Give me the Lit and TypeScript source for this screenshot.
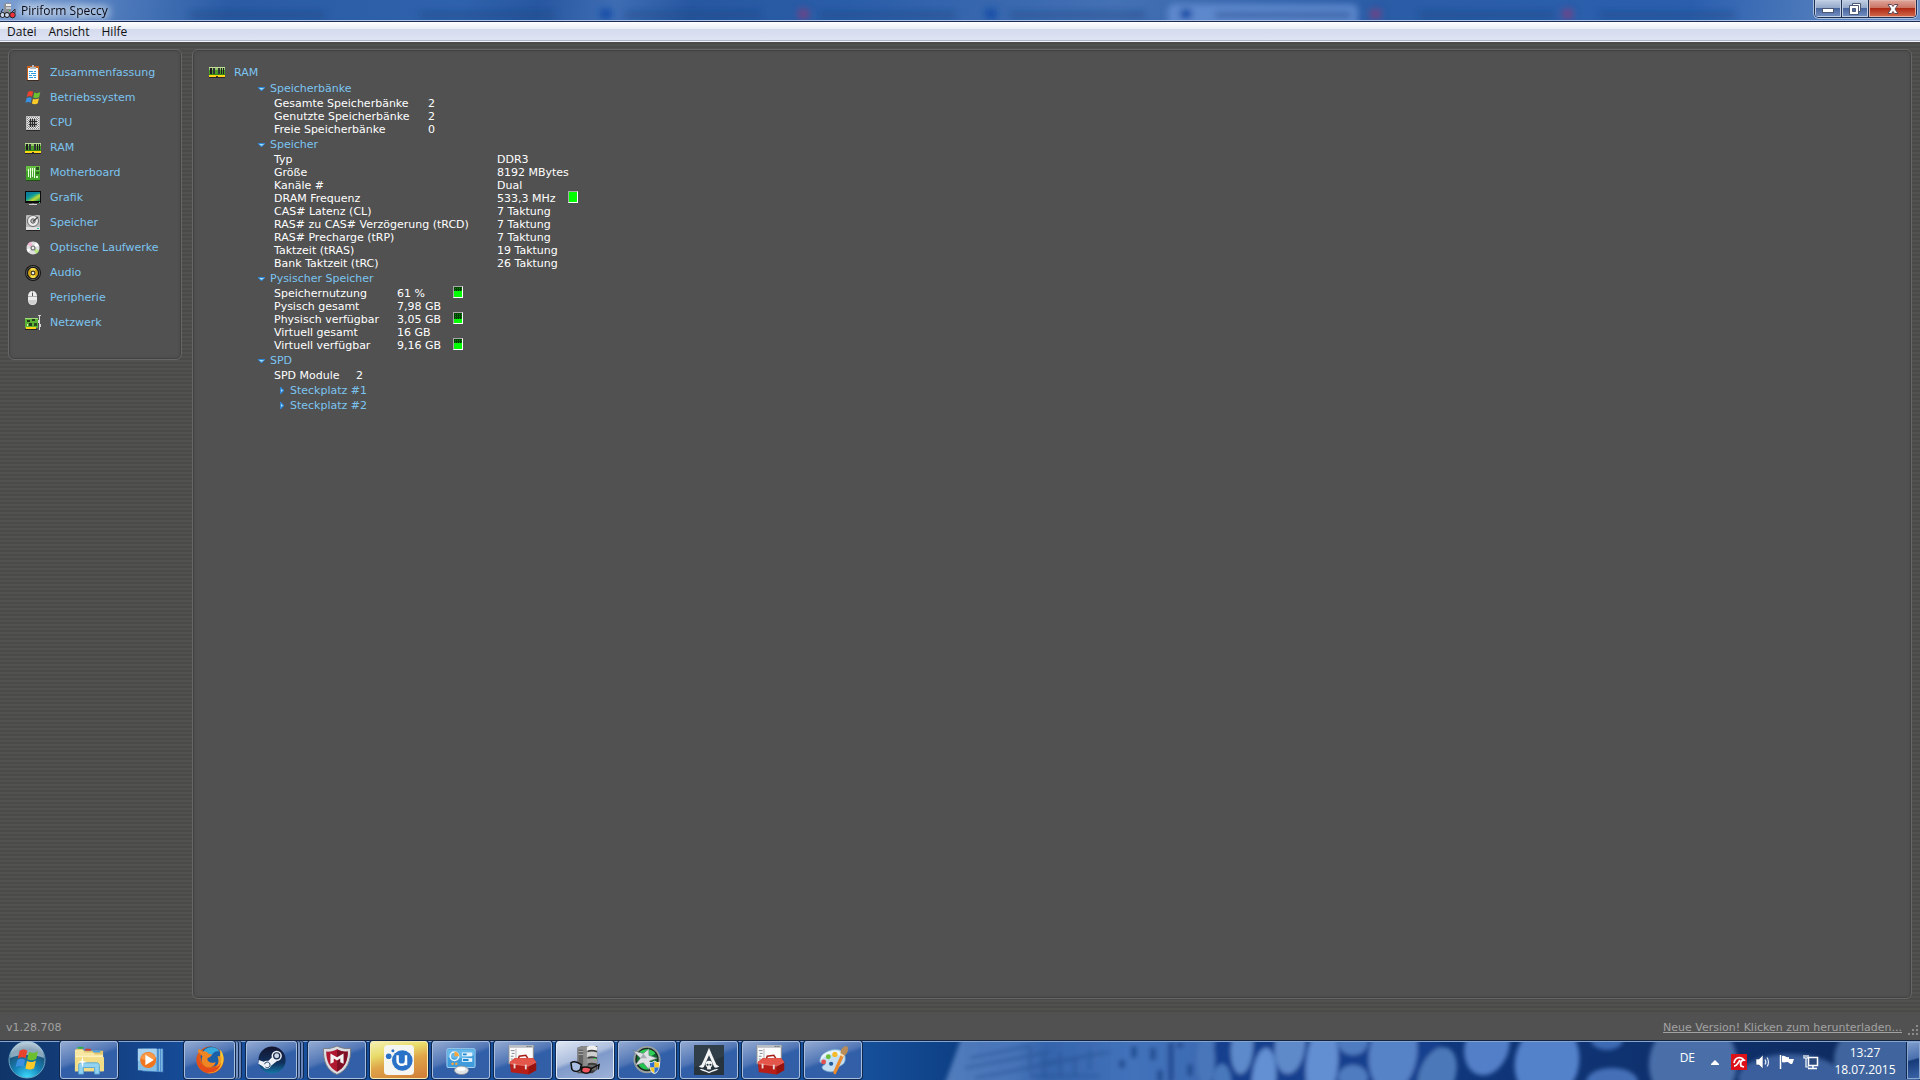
import { LitElement, html, svg, css, nothing } from "lit";
import type { TemplateResult } from "lit";
import { customElement, property, state } from "lit/decorators.js";
import { classMap } from "lit/directives/class-map.js";

/* ---------- 16px icons ---------- */

const flagPanes = svg`
  <path d="M3 2C5 .7 6.600.700 8.200 1.800L7 6.800C5.300 5.800 3.700 5.900 1.800 7.100Z" fill="#e8432c"/>
  <path d="M9.300 2.500C11.300 3.500 13.200 3.500 15.300 2.100L14.200 7.100C12.200 8.500 10.400 8.400 8.200 7.500Z" fill="#6cbf2f"/>
  <path d="M1.500 8.200C3.400 6.900 5 6.900 6.700 7.900L5.600 12.700C3.900 11.700 2.300 11.700.4 12.900Z" fill="#3a8fe0"/>
  <path d="M8 8.700C10 9.700 11.900 9.600 13.900 8.300L12.800 13.300C10.800 14.700 8.900 14.600 6.900 13.600Z" fill="#fbc928"/>`;

const ramArt = svg`
  <rect x="0" y="3" width="16" height="8" fill="#4c9a28"/>
  <rect x="0" y="3" width="16" height="1" fill="#c0e09a"/>
  <rect x="0" y="4" width="16" height="2" fill="#94c468"/>
  <rect x="1" y="4" width="2" height="6" fill="#1c1c22"/><rect x="4" y="4" width="2" height="6" fill="#33333a"/>
  <rect x="9" y="4" width="2" height="6" fill="#33333a"/><rect x="12" y="4" width="1" height="6" fill="#1c1c22"/><rect x="14" y="4" width="1" height="6" fill="#1c1c22"/>
  <rect x="0" y="10" width="16" height="1" fill="#2e8a12"/>
  <rect x="0" y="11" width="16" height="2" fill="#ffd515"/><rect x="7" y="12" width="2" height="1" fill="#333"/>
  <rect x="0" y="13" width="16" height="1" fill="#262626"/>`;

const small: Record<string, TemplateResult> = {
  summary: svg`
    <rect x="2" y="1" width="12" height="14" fill="#c8611f"/>
    <rect x="3" y="3" width="10" height="12" fill="#f8fcff"/>
    <path d="M5 4V2h2V0h2v2h2v2z" fill="#b5b9bd"/>
    <path d="M4 6.500h4M9 6.500h2M4 8.500h1M6 8.500h5M4 10.500h3M8 10.500h3M4 12.500h4M9 12.500h2" stroke="#2e9be0"/>
    <rect x="2" y="15" width="12" height="1" fill="#3a2a22"/>`,
  os: flagPanes,
  cpu: svg`
    <defs><pattern id="pins" width="2" height="2" patternUnits="userSpaceOnUse"><rect width="2" height="2" fill="#efefef"/><path d="M0 0h1v1H0zM1 1h1v1H1z" fill="#8a8a8a"/></pattern></defs>
    <rect x="1" y="1" width="14" height="14" fill="#bdbdbd"/>
    <rect x="2" y="2" width="12" height="12" fill="url(#pins)"/>
    <rect x="4" y="4" width="8" height="8" fill="#a9a9a9"/>
    <path d="M5.500 4v8M7.500 4v8M9.500 4v8M4 6.500h8M4 9.500h8" stroke="#2b2b2b"/>
    <path d="M1 15.500h14" stroke="#2a2a2a"/>`,
  ram: ramArt,
  board: svg`
    <rect x="1" y="1" width="14" height="14" fill="#3fa427"/>
    <rect x="1" y="1" width="14" height="5" fill="#66c044"/>
    <path d="M3.500 4v8M5.500 3v10M7.500 3v9M9.500 3v10" stroke="#e9ffe0"/>
    <rect x="11" y="2" width="3" height="3" fill="#2d4a26"/><rect x="11" y="7" width="3" height="2" fill="#2d6a1e"/>
    <rect x="11" y="11" width="2" height="2" fill="#d6efc8"/>
    <rect x="1" y="15" width="14" height="1" fill="#254d18"/>`,
  graphics: svg`
    <defs><linearGradient id="scr" x1="0" y1="0" x2="1" y2="1">
      <stop offset="0" stop-color="#0f6f8f"/><stop offset=".45" stop-color="#12a296"/><stop offset=".7" stop-color="#c4dd34"/><stop offset="1" stop-color="#0c8c5c"/></linearGradient></defs>
    <rect x="0" y="1" width="16" height="12" fill="#0c0c0c"/>
    <rect x="1" y="2" width="14" height="9" fill="url(#scr)"/>
    <path d="M1 8C5 4 10 3 15 4V2H1z" fill="#0d7f9c" opacity=".7"/>
    <rect x="7" y="13" width="2" height="1" fill="#777"/><rect x="4" y="14" width="8" height="1" fill="#cfcfcf"/>
    <rect x="14" y="12" width="1" height="1" fill="#30e07a"/>`,
  storage: svg`
    <rect x="1" y="0" width="14" height="13" rx="1" fill="#b9b9b9"/>
    <circle cx="8" cy="6" r="5.500" fill="#ededed" stroke="#6a6a6a"/>
    <circle cx="8" cy="6" r="2.200" fill="#c4c4c4" stroke="#555"/>
    <path d="M13 2L8 6.500" stroke="#4a4a4a" stroke-width="1.400"/>
    <rect x="1" y="12" width="14" height="3" fill="#e0e0e0"/><rect x="12" y="13" width="2" height="1" fill="#25c3af"/>
    <rect x="1" y="15" width="14" height="1" fill="#222"/>`,
  optical: svg`
    <circle cx="8" cy="8" r="6.500" fill="#dedede"/>
    <path d="M8 8L2.500 4.500A6.500 6.500 0 0 1 6 1.800z" fill="#f2b3d4"/>
    <path d="M8 8L14 10.500A6.500 6.500 0 0 1 11 13.800z" fill="#b3e87a"/>
    <path d="M8 8L11 2.200A6.500 6.500 0 0 1 14 5.500z" fill="#fff"/>
    <path d="M8 8L3 12.200A6.500 6.500 0 0 1 1.600 9z" fill="#fff"/>
    <circle cx="8" cy="8" r="2.600" fill="#7d7d7d"/><circle cx="8" cy="8" r="1.200" fill="#f4f4f4"/>`,
  audio: svg`
    <circle cx="8" cy="8" r="8" fill="#141414"/><circle cx="8" cy="8" r="6.600" fill="none" stroke="#6a6a6a" stroke-width=".8"/>
    <circle cx="8" cy="8" r="5" fill="#d2a414"/><path d="M8 8L5 4A5 5 0 0 1 11 4zM8 8L5 12A5 5 0 0 0 11 12z" fill="#f8e04c"/>
    <circle cx="8" cy="8" r="2.400" fill="#3a3420"/><circle cx="8" cy="8" r="1.300" fill="#f2efe4"/>`,
  mouse: svg`
    <path d="M3 6C3 3 5 1 7.500 1S12 3 12 6V10C12 13 10.500 15 7.500 15S3 13 3 10z" fill="#ececec"/>
    <path d="M3 6.500h9M7.500 1v5.500" stroke="#9c9c9c" stroke-width=".8"/><rect x="7" y="3" width="1" height="3" fill="#555"/>
    <path d="M3.500 10C4 13 5.500 14.500 7.500 14.500S11 13 11.500 10" fill="#cfcfcf"/>`,
  network: svg`
    <path d="M14.500 1v14M13 .5H16" stroke="#d8d8d8" fill="none"/>
    <rect x="0" y="3" width="13" height="10" fill="#5cb234"/><rect x="0" y="3" width="13" height="1" fill="#a4dc80"/>
    <rect x="2" y="5" width="3" height="2" fill="#233a1c"/><rect x="4" y="8" width="3" height="3" fill="#233a1c"/>
    <rect x="7" y="4" width="3" height="2" fill="#233a1c"/><rect x="9" y="8" width="3" height="3" fill="#2c4a22"/>
    <rect x="2" y="9" width="1" height="2" fill="#d2e8c4"/><rect x="1" y="12" width="10" height="2" fill="#ffd515"/>
    <rect x="13" y="5" width="1" height="3" fill="#d8d8d8"/><rect x="15" y="9" width="1" height="3" fill="#d8d8d8"/><rect x="0" y="14" width="12" height="1" fill="#222"/>`,
  app: svg`
    <path d="M4 1L6 0H11V10H4z" fill="#8d9096"/><rect x="6" y="1" width="5" height="2" fill="#eef0f2"/><rect x="6" y="4" width="5" height="2" fill="#c4c8cc"/><rect x="6" y="7" width="5" height="2" fill="#8d9096"/>
    <rect x="9" y="7" width="1" height="1" fill="#30c84a"/>
    <circle cx="2.500" cy="12" r="2.500" fill="#c9d6ea" stroke="#111"/><circle cx="7" cy="12" r="2.500" fill="#c9d6ea" stroke="#111"/>
    <circle cx="12.500" cy="12" r="2.800" fill="#ee3038" stroke="#222"/><path d="M1 9L3 6M12 9L15 6V10" stroke="#222" fill="none"/>`,
};

/* ---------- 32px taskbar icons ---------- */

const speccy = svg`
  <path d="M8 3L13 1H29V26L24 30H8z" fill="#3e3e3e"/>
  <path d="M8 3L13 1H19V29H8z" fill="#8b8b8b"/><path d="M9 5H14V28H9z" fill="#626262"/>
  <path d="M9 7h5M9 10h5" stroke="#b0b0b0"/>
  <path d="M18 2Q23 -1 29 2V6Q23 4 18 6z" fill="#f0f0f0"/><path d="M18 8Q23 6 29 8V13Q23 11 18 13z" fill="#cfcfcf"/>
  <path d="M18 15Q23 13 29 15V20Q23 18 18 20z" fill="#9c9c9c"/><path d="M18 22Q23 20 28 22V27H18z" fill="#686868"/>
  <rect x="25" y="14" width="3" height="1" fill="#36e04a"/>
  <path d="M1 19C4 17 8 18 12 21L11 26C9 29 4 29 2 26z" fill="#a8bfe2" stroke="#111" stroke-width="1.600"/>
  <path d="M13 24C16 23 20 24 23 25L21 29C18 31 14 30 12 28z" fill="#f0545c" stroke="#111" stroke-width="1.600"/>
  <path d="M23 25L31 21L30 26M11 23L13 25" stroke="#111" stroke-width="1.600" fill="none"/>`;

const toolbox = svg`
  <rect x="1" y="0" width="26" height="20" fill="#fafafa" stroke="#8a8a8a"/>
  <rect x="1" y="0" width="26" height="3" fill="#b9bec4"/><path d="M20 1.500h6" stroke="#444" stroke-dasharray="1 1"/>
  <path d="M8.500 4v16" stroke="#b2b2b2"/><path d="M3 6h4M4 9h3M3 12h3M3 15h2" stroke="#7c8794"/>
  <path d="M11 15L12 12L19 11L21 14" fill="none" stroke="#a81c16" stroke-width="1.600"/>
  <path d="M2 18L7 14L27 14L30 18V27L22 31.500L3 29z" fill="#b81e18"/>
  <path d="M2 18L7 14L27 14L30 18L22 22L2 20z" fill="#e4554a"/>
  <path d="M3 20L22 22.500L30 18.500" stroke="#f08a7e" fill="none" stroke-width=".8"/>
  <path d="M22 23V31.500L30 27V19z" fill="#96140f"/>
  <rect x="6" y="20" width="2" height="5" fill="#e8d6d2"/><rect x="18" y="21" width="2" height="5" fill="#e8d6d2"/>`;

const large: Record<string, TemplateResult> = {
  explorer: svg`
    <path d="M2 4H9L10 6H31V27H2z" fill="#e3c56a"/>
    <rect x="4" y="2" width="6" height="2" fill="#2fae4a"/><rect x="12" y="4" width="6" height="2" fill="#d63c2c"/><rect x="20" y="6" width="8" height="2" fill="#4aa4e8"/>
    <path d="M1 5H10L11 8H21L22 10H31V28H1z" fill="#f7e7a2"/><path d="M1 13H32V28H1z" fill="#f2dc86"/>
    <path d="M2 12h29" stroke="#fff6cc"/>
    <path d="M5 31V22C5 20 6 19 8 19H24C26 19 27 20 27 22V31H22V24H10V31z" fill="#93d2f0" stroke="#5ba7d2"/>
    <path d="M9 12L10 17L14 18L10 19L9 24L8 19L4 18L8 17z" fill="#fff"/>`,
  player: svg`
    <path d="M7 4L29 4V29L7 28z" fill="#4d8fce"/><path d="M25 4V28M27.500 4V28" stroke="#9cc8ea"/>
    <path d="M2 4L22 4V28L2 27z" fill="#86bfe6"/><path d="M2 4L22 4V13L2 17z" fill="#a8d2ee"/>
    <circle cx="13" cy="16" r="8.500" fill="#f2741c"/><path d="M5 14a8.500 8.500 0 0 1 16 0C16 17 10 17 5 14z" fill="#fa9a48"/>
    <path d="M10 10.500L19 16L10 21.500z" fill="#fff"/>`,
  firefox: svg`
    <circle cx="16" cy="16" r="14.500" fill="#e05a17"/>
    <circle cx="17" cy="12.500" r="11" fill="#1a5fa8"/><path d="M9 7C13 1 23 1 26 7C22 6 19 8 18 11C14 12 10 11 9 7z" fill="#38a9dd"/>
    <path d="M27 5C31 10 32 17 28 23C25 28 18 31 13 30C20 29 26 23 26 16C27 12 27 9 27 5z" fill="#fbc52f"/>
    <path d="M3 7L4 4L8 7C10 6 13 7 14 9L18 10C17 13 14 13 13 15C14 19 18 20 22 18C21 23 15 26 10 22C6 19 7 14 8 12z" fill="#f08524"/>
    <path d="M2 11C1 18 4 26 12 29C20 31 27 26 28 18C24 25 14 28 8 22C4 19 3 15 2 11z" fill="#e6491a"/>
    <path d="M24 12C26 17 25 21 22 24C27 22 29 17 28 12z" fill="#f39a25"/>`,
  steam: svg`
    <defs><linearGradient id="stm" x1="0" y1="0" x2="0" y2="1"><stop offset="0" stop-color="#14142e"/><stop offset=".6" stop-color="#10305c"/><stop offset="1" stop-color="#1478a8"/></linearGradient></defs>
    <circle cx="16" cy="16" r="14.500" fill="url(#stm)"/>
    <path d="M2 16L10 19L16 13L24 15L14 23L8 24L1.500 20z" fill="#eef2f8"/>
    <circle cx="21" cy="11.500" r="5.500" fill="#eef2f8"/><circle cx="21" cy="11.500" r="3.900" fill="#17284c"/><circle cx="21" cy="11.500" r="2.600" fill="#cfd8e6"/>
    <circle cx="10.500" cy="21" r="4.200" fill="#eef2f8"/><path d="M8 20.500A3 3 0 1 1 9 23.500" fill="none" stroke="#17365e"/>`,
  mcafee: svg`
    <path d="M1.500 3.500C7 4.500 12 3 16 1C20 3 25 4.500 30.500 3.500C31 17 27 27 16 31.500C5 27 1 17 1.500 3.500z" fill="#d9dce0" stroke="#74797f"/>
    <path d="M4.500 7C9 7.500 13 6 16 4.500C19 6 23 7.500 27.500 7C27.500 17 24 24.500 16 28.500C8 24.500 4.500 17 4.500 7z" fill="#b01830"/>
    <path d="M16 4.500C19 6 23 7.500 27.500 7C27.500 17 24 24.500 16 28.500z" fill="#7f0f24"/>
    <path d="M9 20V9L16 13L23 9V20L19.500 18.500V14.500L16 16.500L12.500 14.500V18.500z" fill="#f4f4f4"/>`,
  uplay: svg`
    <rect width="32" height="32" rx="4" fill="#f5f5f2"/>
    <circle cx="5" cy="12" r="3" fill="#2a72c8"/><circle cx="9.500" cy="6" r="1.600" fill="#2a72c8"/>
    <circle cx="19.500" cy="16.500" r="11" fill="#2a72c8"/><path d="M14.500 11V17C14.500 22.500 23.500 22.500 23.500 17V11" fill="none" stroke="#fff" stroke-width="2.600"/>
    <path d="M23.500 17V21.500" stroke="#fff" stroke-width="2.600"/>`,
  control: svg`
    <rect x="1" y="4" width="30" height="20" rx="1" fill="#3f9bdc" stroke="#a9d8f4"/>
    <path d="M2 5H30V11C20 15 10 15 2 13z" fill="#67b8ea"/>
    <circle cx="9" cy="12" r="4.500" fill="none" stroke="#e8f6ff" stroke-width="1.600"/><path d="M9 12V7A5 5 0 0 1 14 12z" fill="#f6a63c"/>
    <rect x="17" y="8" width="11" height="4" fill="#e4f4fe"/><rect x="17" y="14" width="11" height="4" fill="#e4f4fe"/>
    <path d="M18 10h4M18 16h6" stroke="#1d86cc" stroke-width="2"/>
    <circle cx="7" cy="20" r="1.300" fill="#f6a63c"/><circle cx="11" cy="20" r="1.300" fill="#f6a63c"/>
    <ellipse cx="16.500" cy="27" rx="7.500" ry="4.500" fill="#dfe3e6" stroke="#868c92" stroke-width=".8"/><ellipse cx="16" cy="25.500" rx="4.500" ry="2" fill="#fff"/>`,
  toolbox,
  speccy,
  star: svg`
    <circle cx="16" cy="15.500" r="13.500" fill="#1d2a22" stroke="#98a2a0" stroke-width="2"/>
    <circle cx="16" cy="15.500" r="11" fill="#0c6a2c"/><path d="M7 9C11 3 21 3 25 9L17 14z" fill="#2fd058"/><path d="M7 21C10 26 17 28 22 24L15 17z" fill="#24c24e"/>
    <path d="M1 6L12 9L18 4L18 11L27 14L19 17L18 26L12 19L3 22L9 14z" fill="#dfe3e5" stroke="#6b7275" stroke-width=".6"/>
    <path d="M12 9L16 14L9 14z" fill="#a7adb0"/>
    <path d="M18 18C21 18.500 23 17.500 24 16.500C25 17.500 27 18.500 30 18C30 25 28 29 24 31C20 29 18 25 18 18z" fill="#e9edf2"/>
    <path d="M19 19C21.500 19 23 18.500 24 17.500V24H19.500z" fill="#2c6fd0"/><path d="M24 17.500C25 18.500 27 19 29 19L28.500 24H24z" fill="#f6c82c"/>
    <path d="M19.500 24H24V30C21 28.500 20 27 19.500 24z" fill="#f6c82c"/><path d="M24 24H28.500C28 27 27 28.500 24 30z" fill="#2c6fd0"/>`,
  creed: svg`
    <rect width="32" height="32" fill="#27343d"/><path d="M0 0H32V12L0 24z" fill="#2f3e48"/>
    <path d="M16 3C18 8 21 15 24 21L27 23C25 24.500 22.500 24.500 21.500 23.500L16 11L10.500 23.500C9.500 24.500 7 24.500 5 23L8 21C11 15 14 8 16 3z" fill="#f2f4f5"/>
    <path d="M6 25.500C11 25.500 12 27 16 28.500C20 27 21 25.500 26 25.500C23 28 20 28 16 30C12 28 9 28 6 25.500z" fill="#f2f4f5"/>
    <circle cx="16" cy="20.500" r="3.600" fill="#f2f4f5"/><rect x="14" y="23" width="4" height="3" fill="#f2f4f5"/>
    <circle cx="14.500" cy="21" r="1.100" fill="#27343d"/><circle cx="17.500" cy="21" r="1.100" fill="#27343d"/>`,
  paint: svg`
    <path d="M15 5C25 3 30 9 29 16C28 22 24 21 22 24C20 29 13 30 7 27C3 25 4 22 7 21C9 20 6 17 4 19C0 20 1 8 15 5z" fill="#c4def2" stroke="#6fa4cc" stroke-width=".8"/>
    <path d="M15 6.500C23 5 27 9 27 13C20 8 8 10 3 16C3 10 9 7.500 15 6.500z" fill="#e9f5fd"/>
    <circle cx="6" cy="18" r="2.600" fill="#e0504c"/><circle cx="11" cy="12.500" r="2.600" fill="#6cbf3a"/><circle cx="18" cy="10" r="2.800" fill="#f4bc2c"/><circle cx="14" cy="20" r="2.200" fill="#1f5c9c"/>
    <path d="M24.500 10L27.500 12L19 31C17 32 16 30 16.500 28z" fill="#e98a2c"/>
    <path d="M24.500 10C23 6 26 1 31 1C33 4 32 9 27.500 12z" fill="#b98d5a"/><path d="M24.500 10L27.500 12" stroke="#f5dfb0" stroke-width="2"/>`,
};

/* ---------- data ---------- */

interface Row { label: string; value: string; level?: number; }
interface Section { title: string; labelWidth: number; rows: Row[]; children?: string[]; }

const NAV: [string, string][] = [
  ["summary", "Zusammenfassung"], ["os", "Betriebssystem"], ["cpu", "CPU"], ["ram", "RAM"],
  ["board", "Motherboard"], ["graphics", "Grafik"], ["storage", "Speicher"],
  ["optical", "Optische Laufwerke"], ["audio", "Audio"], ["mouse", "Peripherie"], ["network", "Netzwerk"],
];

const SECTIONS: Section[] = [
  { title: "Speicherbänke", labelWidth: 154, rows: [
    { label: "Gesamte Speicherbänke", value: "2" },
    { label: "Genutzte Speicherbänke", value: "2" },
    { label: "Freie Speicherbänke", value: "0" } ] },
  { title: "Speicher", labelWidth: 223, rows: [
    { label: "Typ", value: "DDR3" },
    { label: "Größe", value: "8192 MBytes" },
    { label: "Kanäle #", value: "Dual" },
    { label: "DRAM Frequenz", value: "533,3 MHz", level: 100 },
    { label: "CAS# Latenz (CL)", value: "7 Taktung" },
    { label: "RAS# zu CAS# Verzögerung (tRCD)", value: "7 Taktung" },
    { label: "RAS# Precharge (tRP)", value: "7 Taktung" },
    { label: "Taktzeit (tRAS)", value: "19 Taktung" },
    { label: "Bank Taktzeit (tRC)", value: "26 Taktung" } ] },
  { title: "Pysischer Speicher", labelWidth: 123, rows: [
    { label: "Speichernutzung", value: "61 %", level: 60 },
    { label: "Pysisch gesamt", value: "7,98 GB" },
    { label: "Physisch verfügbar", value: "3,05 GB", level: 40 },
    { label: "Virtuell gesamt", value: "16 GB" },
    { label: "Virtuell verfügbar", value: "9,16 GB", level: 60 } ] },
  { title: "SPD", labelWidth: 82, rows: [{ label: "SPD Module", value: "2" }], children: ["Steckplatz #1", "Steckplatz #2"] },
];

interface Task { icon: string; name: string; kind?: "plain" | "stack" | "alert" | "active"; }
const TASKS: Task[] = [
  { icon: "explorer", name: "Windows-Explorer" },
  { icon: "player", name: "Windows Media Player", kind: "plain" },
  { icon: "firefox", name: "Mozilla Firefox", kind: "stack" },
  { icon: "steam", name: "Steam", kind: "stack" },
  { icon: "mcafee", name: "McAfee" },
  { icon: "uplay", name: "Uplay", kind: "alert" },
  { icon: "control", name: "Systemsteuerung" },
  { icon: "toolbox", name: "Werkzeuge" },
  { icon: "speccy", name: "Piriform Speccy", kind: "active" },
  { icon: "star", name: "Afterburner" },
  { icon: "creed", name: "Assassin's Creed" },
  { icon: "toolbox", name: "Werkzeuge" },
  { icon: "paint", name: "Paint" },
];

const reset = css`
  button { margin: 0; padding: 0; border: 0; background: none; font: inherit; color: inherit; text-align: left; cursor: pointer; }
  svg { display: block; flex: none; }
  .i16 { width: 16px; height: 16px; }
  .i32 { width: 30px; height: 30px; }
`;

const tiles = css`
  .panel {
    background: #515151;
    border: 1px solid #666;
    border-radius: 6px;
    box-shadow: inset 0 0 0 1px #424242, inset 0 0 3px 1px #484848;
    box-sizing: border-box;
  }
`;

/* ---------- title bar ---------- */

@customElement("title-bar")
class TitleBar extends LitElement {
  static styles = [reset, css`
    :host { display: block; }
    .bar {
      position: relative; display: flex; align-items: flex-start; height: 20px; overflow: hidden;
      border-bottom: 1px solid #a9c0e4; background: linear-gradient(100deg, #7c9fd2 0, #4f7bbc 6%, #2a5ba4 12%, #2f62ac 24%, #2757a0 28%, #3f6db4 32%, #2757a0 36%, #2a5da8 44%, #4470b4 58%, #2a5ca6 72%, #2b5fae 88%, #4b78ba 94%, #6c90c8 100%);
    }
    .edge { height: 1px; background: #1d2c52; }
    .ghosts { position: absolute; inset: 0; width: 100%; height: 100%; }
    .name {
      position: relative; display: flex; align-items: center; gap: 5px; flex: 1; height: 22px;
      font: 12px/20px "Open Sans", "Noto Sans", sans-serif; color: #0a0a14;
    }
    .name span { text-shadow: 0 0 8px #fff, 0 0 8px #fff, 0 0 12px #e8f0ff, 0 0 14px #e8f0ff; }
    .controls {
      position: relative; display: flex; height: 17px; margin-right: 3px; border: 1px solid #1e2f50; border-top: 0;
      border-radius: 0 0 5px 5px; overflow: hidden; box-shadow: 0 0 0 1px #a9bfe0;
    }
    .controls button {
      display: flex; align-items: center; justify-content: center; width: 27px; height: 17px;
      background: linear-gradient(#c2cfe2 0, #94a9cb 45%, #49679f 50%, #7391c2 100%);
      box-shadow: inset 0 0 0 1px #c0cfe6; border-right: 1px solid #1e2f50;
    }
    .controls .close { width: 47px; border-right: 0; background: linear-gradient(#dfa79c 0, #cb7464 45%, #b02a14 50%, #d46a4c 100%); box-shadow: inset 0 0 0 1px #e2b2a8; }
  `];

  render() {
    const xs = [190, 420, 625, 820, 1010, 1215, 1420, 1600];
    return html`<header class="bar">
      <svg class="ghosts" viewBox="0 0 1920 20" preserveAspectRatio="none" aria-hidden="true">
        <defs><filter id="b" x="-10%" width="120%" y="-80%" height="260%"><feGaussianBlur stdDeviation="3"/></filter></defs>
        <g filter="url(#b)">
          <rect x="1168" y="4" width="190" height="26" rx="6" fill="#6c96d8" opacity=".7"/>
          ${xs.map((x) => svg`<rect x=${x} y="12" width="135" height="6" fill="#173f7e" opacity=".45"/>`)}
          ${[798, 1370, 1562].map((x) => svg`<rect x=${x} y="9" width="11" height="10" fill="#8e3a78" opacity=".65"/>`)}
          ${[600, 985, 1180].map((x) => svg`<rect x=${x} y="9" width="12" height="10" fill="#1450a8"/>`)}
        </g>
      </svg>
      <div class="name"><svg class="i16" viewBox="0 0 16 16" aria-hidden="true">${small.app}</svg><span>Piriform Speccy</span></div>
      <div class="controls">
        <button aria-label="Minimieren"><svg width="14" height="14" viewBox="0 0 14 14"><rect x="1.500" y="6.500" width="11" height="4" fill="#fff" stroke="#4b5876"/></svg></button>
        <button aria-label="Wiederherstellen"><svg width="14" height="14" viewBox="0 0 14 14"><path d="M4.500 3V1.500H12.500V9.500H11" fill="#fff" stroke="#4b5876"/><path d="M1.500 3.500H10.500V12.500H1.500zM4.500 6.500V9.500H7.500V6.500z" fill="#fff" fill-rule="evenodd" stroke="#4b5876"/></svg></button>
        <button class="close" aria-label="Schließen"><svg width="14" height="14" viewBox="0 0 14 14"><path d="M2 2.500H5.500L7 4.500L8.500 2.500H12L9 7L12 11.500H8.500L7 9.500L5.500 11.500H2L5 7z" fill="#fff" stroke="#5c4a58"/></svg></button>
      </div>
    </header><div class="edge"></div>`;
  }
}

/* ---------- sidebar ---------- */

@customElement("side-nav")
class SideNav extends LitElement {
  static styles = [reset, tiles, css`
    :host { display: block; flex: none; }
    .panel { width: 174px; padding: 10px 16px 24px; }
    ul { margin: 0; padding: 0; list-style: none; }
    a { display: flex; align-items: center; gap: 9px; height: 25px; color: #7cc4f0; text-decoration: none; white-space: nowrap; }
  `];
  render() {
    return html`<nav class="panel" aria-label="Kategorien"><ul>
      ${NAV.map(([icon, label]) => html`<li><a href="#${icon}"><svg class="i16" viewBox="0 0 16 16" aria-hidden="true">${small[icon]}</svg>${label}</a></li>`)}
    </ul></nav>`;
  }
}

/* ---------- section of the report ---------- */

@customElement("report-section")
class ReportSection extends LitElement {
  @property({ attribute: false }) section!: Section;
  @state() private open = true;

  static styles = [reset, css`
    :host { display: block; }
    h2, h3 { margin: 0; font: inherit; }
    .toggle { display: flex; align-items: center; gap: 5px; height: 17px; color: #7cc4f0; }
    .toggle svg { width: 7px; height: 7px; }
    .body { padding-left: 16px; }
    table { border-collapse: collapse; }
    th, td { padding: 0; height: 13px; font-weight: normal; text-align: left; white-space: nowrap; color: #fff; }
    .gauge {
      display: flex; flex-direction: column; justify-content: flex-end; box-sizing: border-box;
      width: 10px; height: 12px; margin: -1px 0 2px 12px;
      border: 1px solid #fff; border-top-color: #a8a8a8; border-left-color: #a8a8a8;
      background: repeating-conic-gradient(#004800 0 25%, #0a8a0a 0 50%, #002c00 0 75%, #004800 0 100%) 0 0 / 2px 2px;
    }
    .level { background: #00ff00; }
    .children { display: flex; flex-direction: column; padding: 1px 0 0 6px; }
    .children .toggle { height: 15px; gap: 6px; }
    .children svg { width: 4px; height: 7px; }
  `];

  render() {
    const { title, labelWidth, rows, children } = this.section;
    return html`
      <h2><button class="toggle" aria-expanded=${this.open} @click=${() => (this.open = !this.open)}>
        <svg viewBox="0 0 7 7" aria-hidden="true"><path d="M0 2H7V3L4 6H3L0 3z" fill="#2f86d4"/><path d="M1 3H6L3.500 5z" fill="#a6dcfa"/></svg>${title}</button></h2>
      ${this.open ? html`<div class="body">
        <table><colgroup><col style="width:${labelWidth}px"></colgroup>
        <tbody>${rows.map((r) => html`<tr><th scope="row">${r.label}</th>
          ${r.level === undefined ? html`<td colspan="2">${r.value}</td>`
            : html`<td>${r.value}</td><td><div class="gauge"><div class="level" style="height:${r.level}%"></div></div></td>`}</tr>`)}
        </tbody></table>
        ${children ? html`<div class="children">${children.map((c) => html`<h3><button class="toggle" aria-expanded="false">
          <svg viewBox="0 0 4 7" aria-hidden="true"><path d="M0 0H1L4 3V4L1 7H0z" fill="#2f86d4"/><path d="M1 2V5L3 3.500z" fill="#a6dcfa"/></svg>${c}</button></h3>`)}</div>` : nothing}
      </div>` : nothing}`;
  }
}

/* ---------- taskbar ---------- */

@customElement("task-bar")
class TaskBar extends LitElement {
  static styles = [reset, css`
    :host { display: block; }
    .bar {
      position: relative; display: flex; height: 38px; border-top: 1px solid #14233f; overflow: hidden;
      box-shadow: inset 0 1px #86a6d2; background: #10458e; padding-bottom: 1px;
      font-family: "Open Sans", "Noto Sans", sans-serif; font-size: 12px; color: #fff;
    }
    .wall { position: absolute; inset: 1px 0 0; width: 100%; height: 38px; }
    .start { position: relative; width: 56px; padding-left: 7px; box-sizing: border-box; }
    .tasks { position: relative; display: flex; gap: 4px; padding-left: 4px; flex: 1; }
    .task {
      display: flex; align-items: center; justify-content: center; box-sizing: border-box; width: 58px; height: 38px; flex: none;
      border: 1px solid #a7bede; border-radius: 3px; box-shadow: 0 0 0 1px #11284e;
      background: linear-gradient(160deg, #93aad2 0, #5277b6 42%, #315fa8 50%, #335fa6 100%);
    }
    .plain { border-color: transparent; background: none; box-shadow: none; }
    .alert { border-color: #f8edb0; background: linear-gradient(165deg, #f4f0b4 0, #e8dc6a 30%, #dfa448 55%, #d07c38 100%); }
    .active { border-color: #e4ecf8; background: linear-gradient(160deg, #dde5f2 0, #aebfde 42%, #7f9aca 50%, #9db2d8 100%); }
    .stack { width: 51px; margin-right: 7px; box-shadow: 0 0 0 1px #11284e, 3px 0 0 0 #7794c4, 4px 0 0 0 #11284e, 6px 0 0 0 #6484ba, 7px 0 0 0 #11284e; }
    .tray { position: relative; display: flex; align-items: center; gap: 8px; padding-top: 4px; }
    .lang { padding: 0 8px 10px 0; }
    .clock { display: flex; flex-direction: column; align-items: center; width: 84px; line-height: 17px; padding-bottom: 2px; margin-left: -4px; white-space: nowrap; }
    .desktop { position: relative; width: 13px; height: 37px; margin-top: 1px; border: 1px solid #8ba6cf; box-sizing: border-box; background: linear-gradient(165deg, #7d9bcc 0, #4a70ae 45%, #173a78 50%, #3a64a8 100%); box-shadow: -1px 0 #11284e; }
  `];

  render() {
    const petals: [number, number, number, number, number, string][] = [
      [1242, 6, 11, 26, 4, "#5d8aca"], [1264, 36, 12, 30, 5, "#6290d2"], [1290, 4, 15, 28, 7, "#5f8aca"],
      [1322, 22, 16, 40, 5, "#628ed2"], [1353, 0, 15, 13, 0, "#4f7cc0"], [1353, 36, 15, 13, 0, "#4f7cc0"],
      [1393, 12, 24, 38, 8, "#5682c8"], [1437, 34, 18, 30, 20, "#4b78b8"], [1487, 4, 22, 30, 18, "#527fc8"],
      [1547, 20, 32, 40, 12, "#5381ca"], [1607, -2, 16, 10, 0, "#3d6ab4"], [1612, 40, 26, 14, 0, "#4470b8"],
      [1693, 22, 44, 46, 8, "#496ea8"], [1790, 36, 52, 24, 0, "#3a5f9c"], [1880, 18, 46, 40, 0, "#3f659e"],
    ];
    return html`<footer class="bar">
      <svg class="wall" viewBox="0 0 1920 38" preserveAspectRatio="none" aria-hidden="true">
        <defs>
          <linearGradient id="base"><stop offset="0" stop-color="#0f3568"/><stop offset=".06" stop-color="#154286"/><stop offset=".11" stop-color="#164e9c"/><stop offset=".45" stop-color="#16509a"/><stop offset=".5" stop-color="#0d3f84"/><stop offset=".66" stop-color="#103c88"/><stop offset="1" stop-color="#0e2a5c"/></linearGradient>
          <linearGradient id="mid"><stop offset="0" stop-color="#527cbc"/><stop offset=".25" stop-color="#4673b8"/><stop offset=".35" stop-color="#3564ac"/><stop offset=".65" stop-color="#4272ba"/><stop offset="1" stop-color="#3a68b0"/></linearGradient>
          <filter id="soft" x="-5%" width="110%" y="-40%" height="180%"><feGaussianBlur stdDeviation="2"/></filter>
        </defs>
        <rect width="1920" height="38" fill="url(#base)"/>
        <g filter="url(#soft)">
          <path d="M962 -6H1235V44H944z" fill="url(#mid)"/>
          <path d="M970 16L1030 4M965 26L1050 10M975 36L1080 16M1030 4V30M1044 14V38M1060 10V34M1075 18V34M1090 8V28M1110 10L1040 22M1030 34H1100" stroke="#24508f" stroke-width="3" opacity=".5"/>
          <path d="M1134 4V16M1122 18V26M1153 6V18M1171 0V40M1190 22V34M1160 28V40M1180 0V6" stroke="#153c80" stroke-width="6" opacity=".6"/>
          <path d="M1216 -4H1440V44H1208z" fill="#17418e"/>
          <ellipse cx="1206" cy="18" rx="9" ry="26" fill="#4a76ba"/><ellipse cx="1222" cy="38" rx="9" ry="16" fill="#4a78bc"/>
          ${petals.map(([x, y, rx, ry, a, c]) => svg`<ellipse cx=${x} cy=${y} rx=${rx} ry=${ry} fill=${c} transform="rotate(${a} ${x} ${y})"/>`)}
        </g>
      </svg>
      <button class="start" aria-label="Start"><svg width="40" height="38" viewBox="0 0 40 38">
        <defs><radialGradient id="orb" cx=".5" cy="1" r="1"><stop offset="0" stop-color="#3fe0ff"/><stop offset=".4" stop-color="#1583b8"/><stop offset=".8" stop-color="#1c4a6e"/><stop offset="1" stop-color="#9ab4c8"/></radialGradient></defs>
        <circle cx="20" cy="19" r="18" fill="url(#orb)" stroke="#6aa6c4"/>
        <path d="M3 17A17 17 0 0 1 37 17C28 13 12 13 3 17z" fill="#d6e4ee" opacity=".6"/>
        <g transform="translate(8 7) scale(1.500)">${flagPanes}</g></svg></button>
      <div class="tasks">${TASKS.map((t) => html`<button class=${classMap({ task: true, [t.kind ?? "normal"]: true })} aria-label=${t.name}>
        <svg class="i32" viewBox="0 0 32 32">${large[t.icon]}</svg></button>`)}</div>
      <div class="tray">
        <span class="lang">DE</span>
        <button aria-label="Ausgeblendete Symbole"><svg width="12" height="5" viewBox="0 0 12 5"><path d="M0 4L4 0L8 4V5H0z" fill="#fff"/></svg></button>
        <svg class="i16" viewBox="0 0 16 16"><rect width="16" height="16" fill="#dd1219"/><path d="M3 9C4 3 10 2 13 6C10 6 9 9 10 12L13 13M9 6C7 9 6 12 3 12" fill="none" stroke="#fff" stroke-width="1.800"/></svg>
        <svg class="i16" viewBox="0 0 16 16"><path d="M1 5H4L8 1V15L4 11H1z" fill="#fff" stroke="#27406e" stroke-width=".6"/><path d="M10 5.500C11 7 11 9 10 10.500M12 3.500C14 6 14 10 12 12.500" fill="none" stroke="#e6edf8" stroke-width="1.200"/></svg>
        <svg class="i16" viewBox="0 0 16 16"><path d="M1.500 1V15" stroke="#fff" stroke-width="1.500"/><path d="M3 2C6 1 7 4 10 3V5L15 5C14 7 14 9 13 10C10 10 10 8 8 8C6 8 5 9 3 8z" fill="#fff"/></svg>
        <svg class="i16" viewBox="0 0 16 16"><path d="M5.500 3.500H14.500V11.500H5.500z" fill="#2c4a7e" stroke="#fff" stroke-width="1.500"/><path d="M5 14.500H14M10 12V14" stroke="#fff" stroke-width="1.500"/><path d="M1 1V4H5V1M3 4V13H6M3 1V3" fill="none" stroke="#fff" stroke-width="1.200"/></svg>
        <div class="clock"><time>13:27</time><time>18.07.2015</time></div>
      </div>
      <button class="desktop" aria-label="Desktop anzeigen"></button>
    </footer>`;
  }
}

/* ---------- page ---------- */

@customElement("app-root")
class AppRoot extends LitElement {
  static styles = [reset, tiles, css`
    :host {
      display: flex; flex-direction: column; min-height: 100vh; overflow: hidden;
      font: 11px/13px "DejaVu Sans", Verdana, sans-serif;
    }
    .menu {
      display: flex; gap: 12px; height: 18px; padding: 0 7px; border-bottom: 1px solid #b0b6ca; margin-bottom: 1px; box-shadow: 0 1px #f4f5f8;
      background: linear-gradient(#fff 0, #e9edf4 7px, #d4dbec 7px, #dfe4f5 100%);
      font: 12px/20px "Open Sans", "Noto Sans", sans-serif; color: #111;
    }
    .work {
      display: flex; align-items: flex-start; gap: 10px; flex: 1; padding: 7px 8px 15px;
      background: repeating-linear-gradient(#4a4a48 0 2px, #515150 2px 4px);
    }
    main { flex: 1; align-self: stretch; padding: 14px 16px; }
    .head { display: flex; align-items: center; gap: 9px; height: 16px; margin: 0; font: inherit; color: #7cc4f0; }
    .report { padding-left: 49px; }
    .status { display: flex; align-items: center; justify-content: space-between; height: 26px; padding: 0 0 0 6px; background: #515151; color: #a2a2a2; }
    .update { display: flex; align-items: center; gap: 6px; }
    a { color: inherit; }
    .grip { align-self: flex-end; width: 12px; height: 12px; margin-top: 7px; }
  `];

  render() {
    const dots = [[8, 0], [4, 4], [8, 4], [0, 8], [4, 8], [8, 8]];
    return html`
      <title-bar></title-bar>
      <div class="menu" role="menubar">${["Datei", "Ansicht", "Hilfe"].map((m) => html`<button role="menuitem">${m}</button>`)}</div>
      <div class="work">
        <side-nav></side-nav>
        <main class="panel">
          <h1 class="head"><svg class="i16" viewBox="0 0 16 16" aria-hidden="true">${ramArt}</svg>RAM</h1>
          <div class="report">${SECTIONS.map((s) => html`<report-section .section=${s}></report-section>`)}</div>
        </main>
      </div>
      <div class="status"><span>v1.28.708</span>
        <div class="update"><a href="#update">Neue Version! Klicken zum herunterladen...</a>
          <svg class="grip" viewBox="0 0 12 12" aria-hidden="true">${dots.map(([x, y]) => svg`<rect x=${x} y=${y} width="2" height="2" fill="#8c8c8c"/>`)}</svg></div></div>
      <task-bar></task-bar>`;
  }
}
